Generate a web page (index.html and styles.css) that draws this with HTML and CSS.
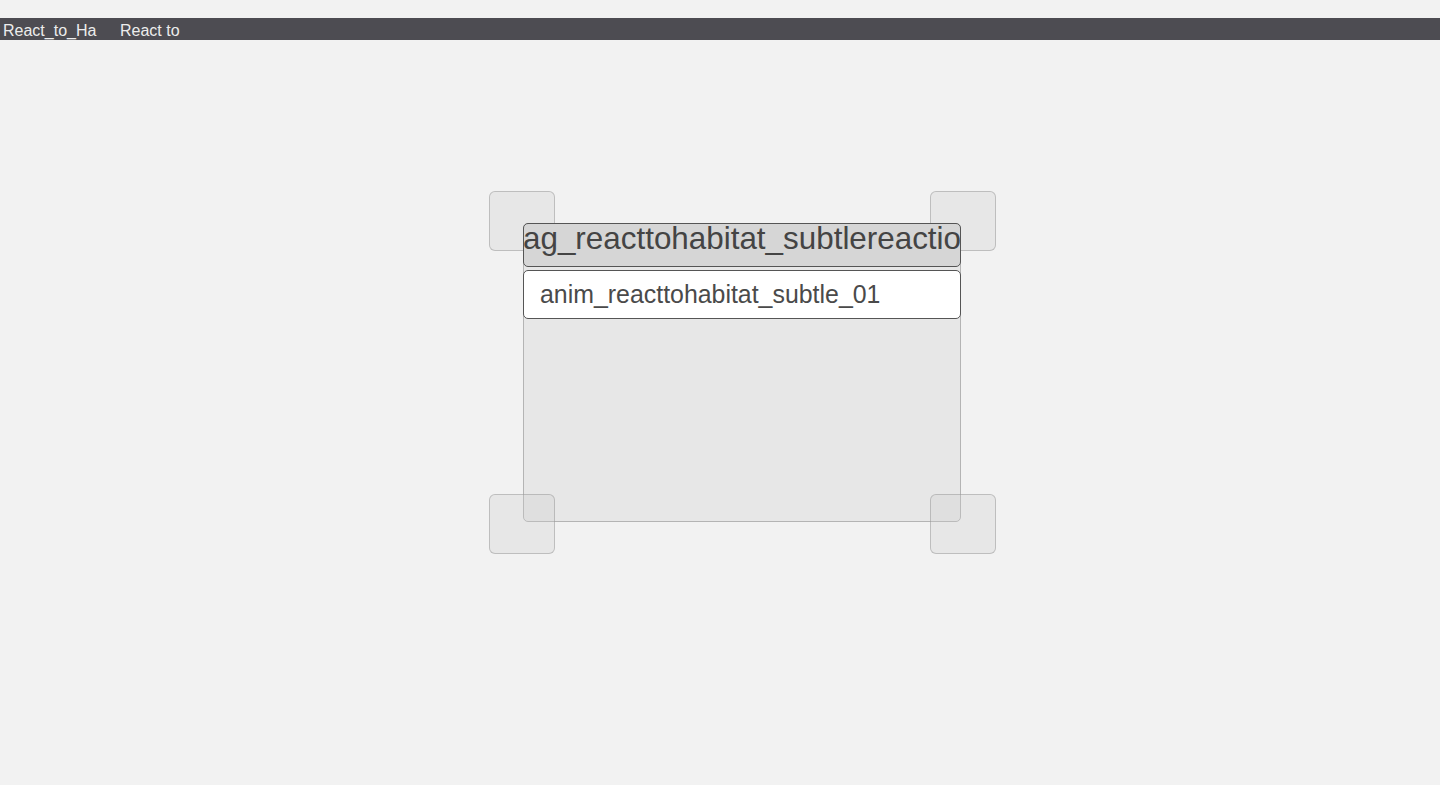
FILE: index.html
```html
<!DOCTYPE html>
<html>
<head>
<meta charset="utf-8">
<link rel="stylesheet" href="styles.css">
</head>
<body>
<div class="topbar">
  <div class="tab tab-first">React_to_Ha</div>
  <div class="tab">React to</div>
</div>
<main class="canvas">
  <div class="node">
    <div class="handle handle-tl"></div>
    <div class="handle handle-tr"></div>
    <div class="node-inner">
      <div class="node-title"><span>ag_reacttohabitat_subtlereactio</span></div>
      <div class="node-row">anim_reacttohabitat_subtle_01</div>
    </div>
    <div class="handle handle-bl"></div>
    <div class="handle handle-br"></div>
  </div>
</main>
</body>
</html>
```
FILE: styles.css
```css
html, body {
  margin: 0;
  padding: 0;
  height: 100%;
}
body {
  background: #f2f2f2;
  font-family: "Liberation Sans", Arial, sans-serif;
  overflow: hidden;
}
.topbar {
  margin-top: 18px;
  height: 22px;
  background: #4d4c52;
  display: flex;
  align-items: center;
}
.tab {
  color: #ececec;
  font-size: 16px;
  line-height: 22px;
  padding-top: 2px;
  box-sizing: border-box;
  height: 22px;
  white-space: nowrap;
  overflow: hidden;
}
.tab-first {
  width: 120px;
  padding-left: 3px;
}
.canvas {
  display: block;
  padding-top: 183px;
  padding-left: 523px;
}
.node {
  position: relative;
  width: 438px;
  height: 299px;
}
.node-inner {
  position: relative;
  z-index: 2;
  width: 438px;
  height: 299px;
  box-sizing: border-box;
  background: #e7e7e7;
  border: 1px solid #b4b4b4;
  border-radius: 5px;
}
.node-title {
  margin: -1px -1px 0 -1px;
  height: 44px;
  box-sizing: border-box;
  background: #d6d6d6;
  border: 1px solid #555;
  border-radius: 5px;
  overflow: hidden;
  white-space: nowrap;
  font-size: 31.4px;
  line-height: 30px;
  color: #444;
}
.node-title span {
  display: block;
  margin-left: -1px;
}
.node-row {
  margin: 3px -1px 0 -1px;
  height: 49px;
  box-sizing: border-box;
  background: #fff;
  border: 1px solid #555;
  border-radius: 5px;
  padding-left: 16px;
  font-size: 24.9px;
  line-height: 47px;
  color: #4a4a4a;
  white-space: nowrap;
  overflow: hidden;
}
.handle {
  position: absolute;
  width: 66px;
  height: 60px;
  box-sizing: border-box;
  background: rgba(205, 205, 205, 0.3);
  border: 1px solid rgba(140, 140, 140, 0.45);
  border-radius: 6px;
}
.handle-tl { left: -34px; top: -32px; z-index: 1; }
.handle-tr { left: 407px; top: -32px; z-index: 1; }
.handle-bl { left: -34px; top: 271px; z-index: 3; }
.handle-br { left: 407px; top: 271px; z-index: 3; }
```
